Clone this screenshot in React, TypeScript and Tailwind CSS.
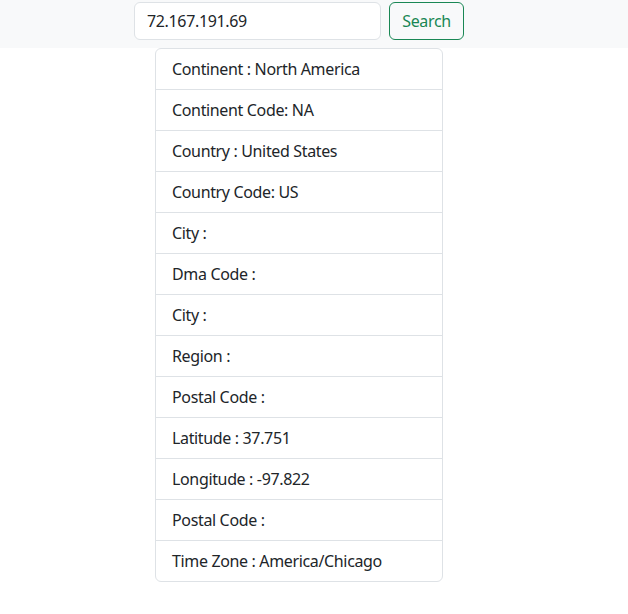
import React from 'react';

const rows = [
  'Continent : North America',
  'Continent Code: NA',
  'Country : United States',
  'Country Code: US',
  'City :',
  'Dma Code :',
  'City :',
  'Region :',
  'Postal Code :',
  'Latitude : 37.751',
  'Longitude : -97.822',
  'Postal Code :',
  'Time Zone : America/Chicago',
];

export default function App() {
  return (
    <div className="min-h-[614px] w-full bg-white text-[#212529] font-['Noto_Sans',sans-serif] text-base tracking-[-0.35px]">
      <nav className="h-[48px] bg-[#f8f9fa] flex justify-center pt-[2px] pr-[30px]">
        <form className="flex gap-2" onSubmit={(e) => e.preventDefault()}>
          <input
            defaultValue="72.167.191.69"
            className="w-[247px] h-[38px] px-3 border border-[#dee2e6] rounded-md bg-white text-[#212529] outline-none tracking-[-0.35px]"
          />
          <button
            type="submit"
            className="w-[75px] h-[38px] border border-[#198754] rounded-md text-[#198754] bg-transparent tracking-[-0.35px]"
          >
            Search
          </button>
        </form>
      </nav>
      <div className="flex justify-center pr-[30px]">
        <ul className="w-[288px] border border-[#dee2e6] rounded-md">
          {rows.map((r, i) => (
            <li
              key={i}
              className={`h-[40px] px-4 flex items-center ${i > 0 ? 'border-t border-[#dee2e6] h-[41px]' : ''}`}
            >
              {r}
            </li>
          ))}
        </ul>
      </div>
    </div>
  );
}
